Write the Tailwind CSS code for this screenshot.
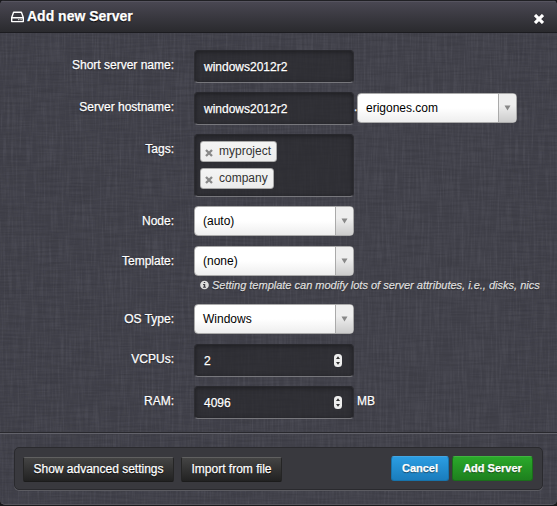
<!DOCTYPE html>
<html lang="en">
<head>
<meta charset="utf-8">
<title>Add new Server</title>
<script src="https://cdn.jsdelivr.net/npm/@tailwindcss/browser@4"></script>
</head>
<body class="h-[506px] w-[557px] overflow-hidden bg-[#19191c] font-['Liberation_Sans',Arial,sans-serif] text-[12px] leading-[16px] text-white">
<div class="relative isolate flex h-[505px] w-[557px] flex-col overflow-hidden rounded-[5px] border-b border-[#55555c] bg-[#42424b] [-webkit-text-stroke:0.25px_currentColor]">
  <!-- woven linen background -->
  <svg class="absolute inset-0 -z-10" width="557" height="505" color-interpolation-filters="sRGB">
    <filter id="v" x="0" y="0" width="100%" height="100%"><feTurbulence type="fractalNoise" baseFrequency="0.5 0.03" numOctaves="2" seed="4"/><feColorMatrix values="0 0 0 0 0.7  0 0 0 0 0.7  0 0 0 0 0.75  1 0 0 0 -0.38"/></filter>
    <filter id="h" x="0" y="0" width="100%" height="100%"><feTurbulence type="fractalNoise" baseFrequency="0.03 0.5" numOctaves="2" seed="9"/><feColorMatrix values="0 0 0 0 0.08  0 0 0 0 0.08  0 0 0 0 0.1  1 0 0 0 -0.38"/></filter>
    <rect width="557" height="505" filter="url(#v)" opacity=".2"/>
    <rect width="557" height="505" filter="url(#h)" opacity=".28"/>
  </svg>

  <header class="flex h-[33px] shrink-0 items-center border-t border-b border-t-[#202024] border-b-[#1c1c20] bg-linear-to-b from-[#4a4853] to-[#2a2a2e] pr-[13px] pl-[11px] shadow-[inset_0_1px_0_#56545f]">
    <svg class="mr-[3px]" width="13" height="12" viewBox="0 0 13 12" fill="none" stroke="#fff" stroke-width="1.4" stroke-linejoin="round"><path d="M.7 6.5 2.6 1.2h7.8l1.9 5.3v4.1H.7zM.7 6.7h11.6"/><path d="M7.2 8.7h1.2M9.5 8.7h1.2" stroke-width="1"/></svg>
    <h1 class="-mt-[1px] text-[14px] font-bold [text-shadow:0_1px_1px_#000]">Add new Server</h1>
    <svg class="mt-[5px] ml-auto" width="10" height="10" viewBox="0 0 10 10" stroke="#fff" stroke-width="3.1"><path d="M1 1 9 9M9 1 1 9"/></svg>
  </header>

  <main class="flex h-[399px] shrink-0 flex-col pt-[17px] [text-shadow:0_1px_1px_#0008]">
    <div class="flex h-[42px]">
      <label class="mr-[20px] w-[174px] pt-[7px] text-right">Short server name:</label>
      <div class="flex h-[33px] w-[160px] items-center rounded-[4px] border border-t-[#28282d] border-r-[#2d2d32] border-b-[#77777c] border-l-[#2d2d32] bg-[#28282c]/70 pl-[9px] shadow-[inset_0_1px_5px_#0006]">windows2012r2</div>
    </div>
    <div class="flex h-[42px]">
      <label class="mr-[20px] w-[174px] pt-[7px] text-right">Server hostname:</label>
      <div class="flex h-[33px] w-[160px] items-center rounded-[4px] border border-t-[#28282d] border-r-[#2d2d32] border-b-[#77777c] border-l-[#2d2d32] bg-[#28282c]/70 pl-[9px] shadow-[inset_0_1px_5px_#0006]">windows2012r2</div>
      <span class="w-[3px] pt-[7px]">.</span>
      <div class="mt-[1px] flex h-[30px] w-[160px] overflow-hidden rounded-[4px] border border-[#aaa] bg-linear-to-t from-[#eee] to-white to-50% text-black [text-shadow:none] [-webkit-text-stroke:0]"><span class="flex-1 pt-[6px] pl-[8px]">erigones.com</span><span class="flex w-[18px] items-center justify-center border-l border-[#aaa] bg-linear-to-t from-[#ccc] to-[#eee] to-60%"><svg width="7" height="6"><path d="M.5.5h6l-3 5z" fill="#888"/></svg></span></div>
    </div>
    <div class="flex h-[72px]">
      <label class="mr-[20px] w-[174px] pt-[7px] text-right">Tags:</label>
      <div class="flex h-[63px] w-[160px] flex-col items-start gap-[6px] rounded-[4px] border border-t-[#28282d] border-r-[#2d2d32] border-b-[#77777c] border-l-[#2d2d32] bg-[#28282c]/70 pt-[6px] pl-[5px] shadow-[inset_0_1px_5px_#0006] [text-shadow:none] [-webkit-text-stroke:0]">
        <div class="flex h-[21px] w-[77px] rounded-[3px] border border-[#aaa] bg-linear-to-b from-[#f4f4f4] to-[#ececec] pl-[4px] text-[#333]"><svg class="mt-[7px] mr-[6px]" width="8" height="8" viewBox="0 0 8 8" stroke="#888" stroke-width="2.3"><path d="m1 1 6 6M7 1 1 7"/></svg><span class="pt-[1px]">myproject</span></div>
        <div class="flex h-[21px] w-[74px] rounded-[3px] border border-[#aaa] bg-linear-to-b from-[#f4f4f4] to-[#ececec] pl-[4px] text-[#333]"><svg class="mt-[7px] mr-[6px]" width="8" height="8" viewBox="0 0 8 8" stroke="#888" stroke-width="2.3"><path d="m1 1 6 6M7 1 1 7"/></svg><span class="pt-[1px]">company</span></div>
      </div>
    </div>
    <div class="flex h-[40px]">
      <label class="mr-[20px] w-[174px] pt-[7px] text-right">Node:</label>
      <div class="flex h-[30px] w-[160px] overflow-hidden rounded-[4px] border border-[#aaa] bg-linear-to-t from-[#eee] to-white to-50% text-black [text-shadow:none] [-webkit-text-stroke:0]"><span class="flex-1 pt-[6px] pl-[8px]">(auto)</span><span class="flex w-[18px] items-center justify-center border-l border-[#aaa] bg-linear-to-t from-[#ccc] to-[#eee] to-60%"><svg width="7" height="6"><path d="M.5.5h6l-3 5z" fill="#888"/></svg></span></div>
    </div>
    <div class="flex h-[30px]">
      <label class="mr-[20px] w-[174px] pt-[7px] text-right">Template:</label>
      <div class="flex h-[30px] w-[160px] overflow-hidden rounded-[4px] border border-[#aaa] bg-linear-to-t from-[#eee] to-white to-50% text-black [text-shadow:none] [-webkit-text-stroke:0]"><span class="flex-1 pt-[6px] pl-[8px]">(none)</span><span class="flex w-[18px] items-center justify-center border-l border-[#aaa] bg-linear-to-t from-[#ccc] to-[#eee] to-60%"><svg width="7" height="6"><path d="M.5.5h6l-3 5z" fill="#888"/></svg></span></div>
    </div>
    <div class="flex h-[28px] pt-[1px] pl-[200px] text-[11px] whitespace-nowrap text-[#ddd] italic">
      <svg class="mt-[3px] mr-[3px] shrink-0" width="9" height="10" viewBox="0 0 10 10"><circle cx="5" cy="5" r="4.8" fill="#ddd"/><path d="M4.2 1.6h1.6v1.3H4.2zM3.4 4h2.4v3h.8v1H3.4V7h.8V5h-.8z" fill="#3b3b43"/></svg>
      <span>Setting template can modify lots of server attributes, i.e., disks, nics</span>
    </div>
    <div class="flex h-[40px]">
      <label class="mr-[20px] w-[174px] pt-[7px] text-right">OS Type:</label>
      <div class="flex h-[30px] w-[160px] overflow-hidden rounded-[4px] border border-[#aaa] bg-linear-to-t from-[#eee] to-white to-50% text-black [text-shadow:none] [-webkit-text-stroke:0]"><span class="flex-1 pt-[6px] pl-[8px]">Windows</span><span class="flex w-[18px] items-center justify-center border-l border-[#aaa] bg-linear-to-t from-[#ccc] to-[#eee] to-60%"><svg width="7" height="6"><path d="M.5.5h6l-3 5z" fill="#888"/></svg></span></div>
    </div>
    <div class="flex h-[42px]">
      <label class="mr-[20px] w-[174px] pt-[7px] text-right">VCPUs:</label>
      <div class="flex h-[33px] w-[160px] items-center justify-between rounded-[4px] border border-t-[#28282d] border-r-[#2d2d32] border-b-[#77777c] border-l-[#2d2d32] bg-[#28282c]/70 pr-[11px] pl-[9px] shadow-[inset_0_1px_5px_#0006]">2<svg width="8" height="13"><rect width="8" height="13" rx="3.5" fill="#eee"/><path d="M2 5h4L4 2.2zM2 8h4L4 10.8z" fill="#333"/></svg></div>
    </div>
    <div class="flex h-[42px]">
      <label class="mr-[20px] w-[174px] pt-[7px] text-right">RAM:</label>
      <div class="flex h-[33px] w-[160px] items-center justify-between rounded-[4px] border border-t-[#28282d] border-r-[#2d2d32] border-b-[#77777c] border-l-[#2d2d32] bg-[#28282c]/70 pr-[11px] pl-[9px] shadow-[inset_0_1px_5px_#0006]">4096<svg width="8" height="13"><rect width="8" height="13" rx="3.5" fill="#eee"/><path d="M2 5h4L4 2.2zM2 8h4L4 10.8z" fill="#333"/></svg></div>
      <span class="pt-[7px] pl-[3px]">MB</span>
    </div>
  </main>

  <footer class="h-[73px] border-t border-[#29292e] px-[14px] pt-[14px] shadow-[inset_0_1px_0_#62626a]">
    <div class="flex h-[43px] w-[529px] items-start rounded-[5px] border border-[#2a2a2e] bg-[#39393e] pt-[9px] pr-[9px] pl-[8px] [box-shadow:0_1px_0_#5c5c62]">
      <button class="h-[25px] w-[151px] rounded-[2px] border border-t-[#606060] border-r-[#252525] border-b-[#1c1c1c] border-l-[#252525] bg-linear-to-b from-[#444] to-[#222] pb-[2px] [text-shadow:0_1px_1px_#000]">Show advanced settings</button>
      <button class="ml-[7px] h-[25px] w-[101px] rounded-[2px] border border-t-[#606060] border-r-[#252525] border-b-[#1c1c1c] border-l-[#252525] bg-linear-to-b from-[#444] to-[#222] pb-[2px] [text-shadow:0_1px_1px_#000]">Import from file</button>
      <button class="-mt-[1px] ml-auto h-[25px] w-[58px] rounded-[3px] border border-[#1773ab] border-t-[#42a5e2] bg-linear-to-b from-[#2b9de2] to-[#1a7dbd] pb-[2px] text-[11px] font-bold [text-shadow:0_1px_1px_#0008]">Cancel</button>
      <button class="-mt-[1px] ml-[3px] h-[25px] w-[81px] rounded-[3px] border border-[#1b6d1b] border-t-[#40b440] bg-linear-to-b from-[#2aa92a] to-[#1e801e] pb-[2px] text-[11px] font-bold [text-shadow:0_1px_1px_#0008]">Add Server</button>
    </div>
  </footer>
</div>
</body>
</html>
